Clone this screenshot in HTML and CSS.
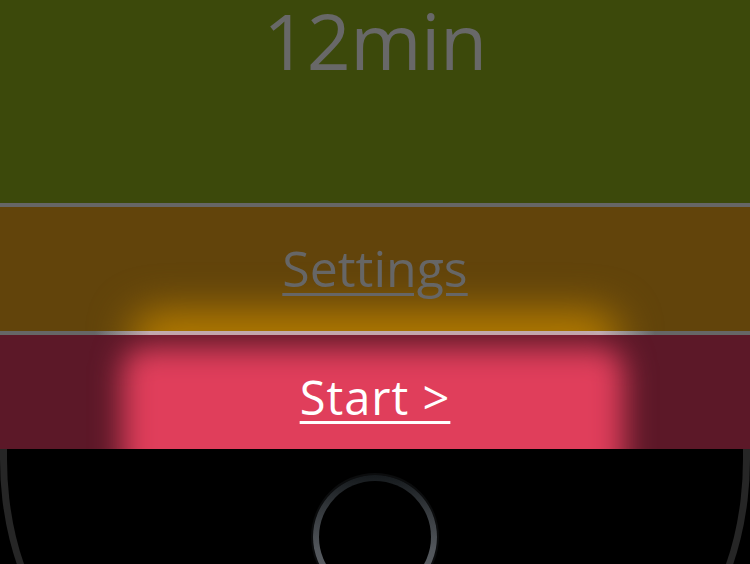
FILE: index.html
```html
<!DOCTYPE html>
<html lang="en">
<head>
<meta charset="utf-8">
<title>Timer</title>
<link rel="stylesheet" href="styles.css">
</head>
<body>
<div class="screen">
  <section class="panel duration">
    <div class="duration-value">12min</div>
  </section>
  <section class="panel settings">
    <a class="settings-link" href="#">Settings</a>
  </section>
  <section class="panel start">
    <a class="start-link" href="#">Start &gt;</a>
  </section>
</div>
<div class="bezel">
  <div class="bezel-edge">
    <div class="home-button"><div class="home-inner"></div></div>
  </div>
</div>
</body>
</html>
```
FILE: styles.css
```css
html, body {
  margin: 0;
  padding: 0;
  background: #000;
  height: 100%;
  overflow: hidden;
}

body {
  font-family: "Open Sans", "Noto Sans", sans-serif;
  width: 750px;
}

.screen {
  display: flex;
  flex-direction: column;
}

.panel {
  display: flex;
  justify-content: center;
  position: relative;
  overflow: hidden;
}

.duration {
  height: 203px;
  background: #3c490b;
  border-bottom: 4px solid #666;
  align-items: flex-start;
}

.duration-value {
  font-size: 77px;
  line-height: 0.9;
  color: #686868;
  margin-top: 6px;
  letter-spacing: -0.5px;
}

.settings {
  height: 124px;
  background: #62440b;
  align-items: center;
}

.settings::after {
  content: "";
  position: absolute;
  left: 130px;
  right: 130px;
  bottom: -36px;
  height: 56px;
  background: #b57c00;
  filter: blur(20px);
  border-radius: 40px;
}

.settings-link {
  position: relative;
  z-index: 1;
  font-size: 50px;
  line-height: 1;
  color: #666;
  text-decoration: underline;
  text-decoration-thickness: 3px;
  text-underline-offset: 6px;
  margin-top: -2px;
}

.start {
  height: 114px;
  padding-top: 4px;
  background:
    linear-gradient(to right, #666 95px, #bdbdbd 150px, #bdbdbd 600px, #666 655px) top / 100% 4px no-repeat,
    #5c1828;
  align-items: center;
}

.start::before {
  content: "";
  position: absolute;
  left: 122px;
  right: 126px;
  top: 16px;
  bottom: -40px;
  background: #e03e5b;
  filter: blur(15px);
  border-radius: 24px;
}

.start-link {
  position: relative;
  z-index: 1;
  font-size: 47px;
  line-height: 1;
  color: #fff;
  text-decoration: underline;
  text-decoration-thickness: 3px;
  text-underline-offset: 6px;
  margin-top: 10px;
  letter-spacing: 1px;
}

.bezel {
  height: 115px;
  background: #000;
  overflow: hidden;
}

.bezel-edge {
  height: 230px;
  box-sizing: border-box;
  margin-top: -10px;
  border: 7px solid #262626;
  border-top: none;
  border-radius: 0 0 125px 125px / 0 0 210px 210px;
  display: flex;
  justify-content: center;
  padding-top: 36px;
}

.home-button {
  width: 124px;
  height: 124px;
  border-radius: 50%;
  box-sizing: border-box;
  padding: 6px;
  background: linear-gradient(to bottom, #15191c 0%, #363a3e 30%, #52565b 60%, #5c6065 100%);
  box-shadow: 0 0 0 2px #0b0c0d;
}

.home-inner {
  width: 100%;
  height: 100%;
  border-radius: 50%;
  background: #000;
}
```
